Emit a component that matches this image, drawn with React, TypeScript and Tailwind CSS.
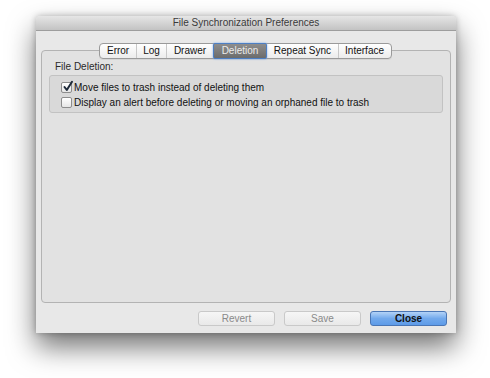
import { useState } from "react";

const font = { fontFamily: '"Liberation Sans", Arial, sans-serif' };

const tabs = ["Error", "Log", "Drawer", "Deletion", "Repeat Sync", "Interface"];

function Checkbox({ checked, label, onChange }: { checked: boolean; label: string; onChange: () => void }) {
  return (
    <label className="flex items-center gap-[2px] h-[15px] cursor-default" onClick={onChange}>
      <span className="relative w-[11px] h-[11px] shrink-0 rounded-[2px] border border-[#8d8d8d] bg-gradient-to-b from-white to-[#e6e6e6] shadow-[inset_0_1px_0_#fff]">
        {checked && (
          <svg className="absolute -top-[3px] left-0" width="12" height="13" viewBox="0 0 12 13">
            <path d="M2.5 7 L4.8 10 L10 1.8" fill="none" stroke="#1e2a3a" strokeWidth="2" strokeLinecap="round" strokeLinejoin="round" />
          </svg>
        )}
      </span>
      <span className="text-[10px] text-[#111] leading-none">{label}</span>
    </label>
  );
}

export default function App() {
  const [active, setActive] = useState("Deletion");
  const [moveToTrash, setMoveToTrash] = useState(true);
  const [alertFirst, setAlertFirst] = useState(false);

  return (
    <div className="w-[490px] h-[378px] bg-white pt-[16px] pl-[36px]" style={font}>
      {/* Window */}
      <div className="w-[420px] h-[317px] flex flex-col bg-[#e8e8e8] rounded-t-[4px] shadow-[0_14px_28px_rgba(0,0,0,0.55),0_0_6px_rgba(0,0,0,0.25)]">
        {/* Title bar */}
        <div className="h-[15px] flex items-center justify-center rounded-t-[4px] bg-gradient-to-b from-[#e6e6e6] to-[#c3c3c3] border-b border-[#9d9d9d]">
          <span className="text-[10px] text-[#3a3a3a] leading-none">File Synchronization Preferences</span>
        </div>

        {/* Tab view */}
        <div className="flex flex-col px-[5px] pt-[12px]">
          <div className="relative z-10 flex justify-center h-[16px] -mb-[9px] pr-[1px]">
            <div className="flex h-[16px] rounded-[4px] border border-[#9a9a9a] bg-gradient-to-b from-white to-[#ececec] shadow-[0_1px_0_rgba(0,0,0,0.06)]">
              {tabs.map((t, i) => {
                const sel = t === active;
                const prevSel = i > 0 && tabs[i - 1] === active;
                return (
                  <button
                    key={t}
                    onClick={() => setActive(t)}
                    className={
                      sel
                        ? "h-[16px] -my-[1px] px-[8px] rounded-[2px] border border-[#4d7fc4] bg-gradient-to-b from-[#8e8e8e] to-[#6c6c6c] text-[#ececec] text-[10px] leading-none shadow-[0_0_2px_#6ea2e8]"
                        : `h-[14px] px-[6.5px] text-[10px] leading-none text-[#111] ${i > 0 && !prevSel ? "border-l border-[#c8c8c8]" : ""}`
                    }
                  >
                    {t}
                  </button>
                );
              })}
            </div>
          </div>

          <div className="h-[253px] rounded-[4px] border border-[#b3b3b3] bg-[#e2e2e2] px-[7px] pt-[11px]">
            <div className="text-[10px] text-[#2a2a2a] leading-none pl-[6px]">File Deletion:</div>
            <div className="mt-[3px] h-[38px] rounded-[3px] border border-[#c2c2c2] bg-[#d9d9d9] pl-[11px] pt-[4px] flex flex-col">
              <Checkbox checked={moveToTrash} onChange={() => setMoveToTrash(!moveToTrash)} label="Move files to trash instead of deleting them" />
              <Checkbox checked={alertFirst} onChange={() => setAlertFirst(!alertFirst)} label="Display an alert before deleting or moving an orphaned file to trash" />
            </div>
          </div>
        </div>

        {/* Buttons */}
        <div className="flex justify-end gap-[9px] pr-[9px] pt-[8px]">
          <button className="w-[77px] h-[15px] rounded-[3px] border border-[#c9c9c9] bg-gradient-to-b from-[#f6f6f6] to-[#e9e9e9] text-[10px] leading-none text-[#8a8a8a]">Revert</button>
          <button className="w-[77px] h-[15px] rounded-[3px] border border-[#c9c9c9] bg-gradient-to-b from-[#f6f6f6] to-[#e9e9e9] text-[10px] leading-none text-[#8a8a8a]">Save</button>
          <button className="w-[77px] h-[15px] rounded-[3px] border border-[#4a76b5] bg-gradient-to-b from-[#b3d3f7] via-[#72a9ec] to-[#5d9be8] text-[10px] font-bold leading-none text-[#111]">Close</button>
        </div>
      </div>
    </div>
  );
}
